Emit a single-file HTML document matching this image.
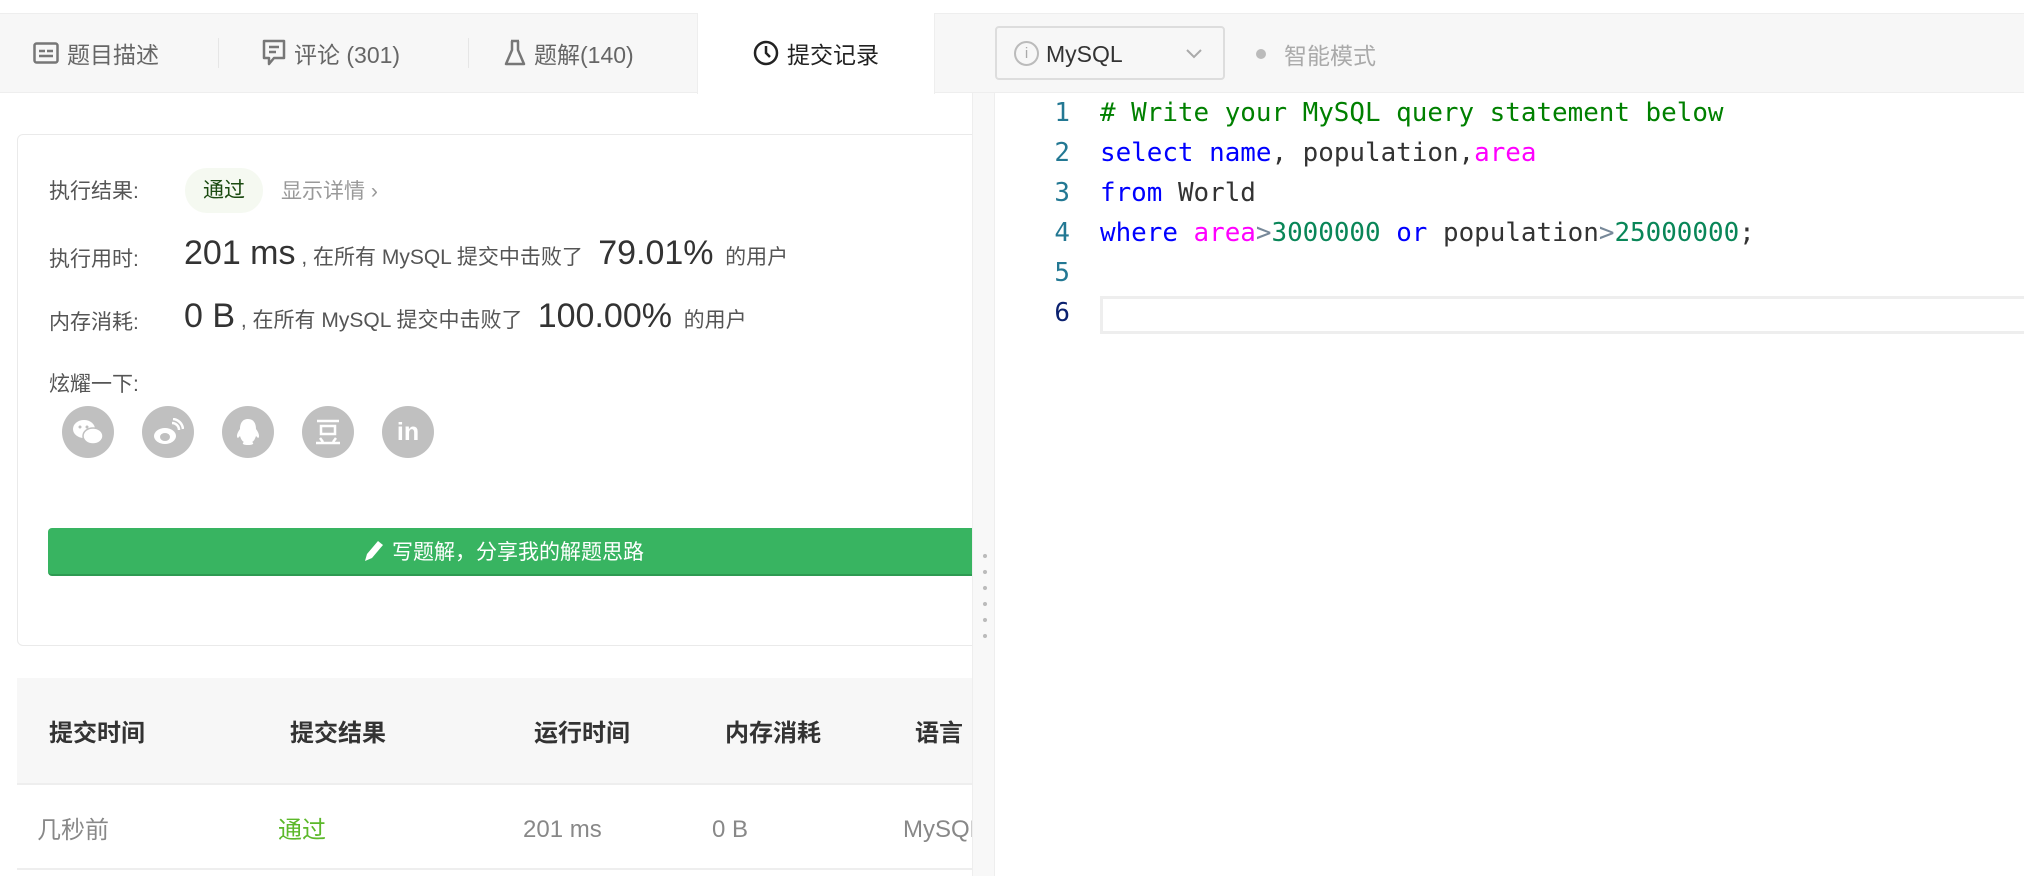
<!DOCTYPE html>
<html><head><meta charset="utf-8"><style>
*{box-sizing:border-box;margin:0;padding:0}
body{width:2024px;height:876px;overflow:hidden;background:#fff;font-family:"Liberation Sans","Noto Sans CJK SC",sans-serif;position:relative;color:#333}
.abs{position:absolute}
.tabbar{left:0;top:13px;width:2024px;height:80px;background:#f7f7f7;border-top:1px solid #eee;border-bottom:1px solid #eee}
.tab{top:13px;height:80px;display:flex;align-items:center;font-size:23px;color:#666;white-space:nowrap}
.tab svg{margin-right:8px}
.sep{top:38px;width:1px;height:30px;background:#e6e6e6}
.lbl{font-size:21px;color:#555;white-space:nowrap}
.big{font-size:34px;color:#333}
.ico{width:52px;height:52px;border-radius:50%;background:#c0c0c0;top:406px;display:flex;align-items:center;justify-content:center;color:#fff;font-weight:bold;font-size:26px}
.th{top:713px;font-size:24px;color:#333;font-weight:bold;white-space:nowrap}
.td{top:814px;font-size:24px;color:#888;white-space:nowrap}
.code{font-family:"DejaVu Sans Mono","Liberation Mono",monospace;font-size:25.9px;white-space:pre;line-height:40px}
.ln{left:1030px;width:40px;text-align:right;color:#237893}
.k{color:#0000ff}.c{color:#008000}.m{color:#ff00ff}.n{color:#098658}.g{color:#778899}
</style></head><body>
<div class="abs tabbar"></div>
<div class="abs" style="left:697px;top:13px;width:238px;height:81px;background:#fff;border-left:1px solid #eee;border-right:1px solid #eee"></div>
<div class="abs tab" style="left:33px"><svg width="26" height="22" viewBox="0 0 26 22"><rect x="1.5" y="1.5" width="23" height="19" rx="2" fill="none" stroke="#777" stroke-width="2.5"/><path d="M6 9h6M14 9h6M6 14h14" stroke="#777" stroke-width="2.5"/></svg>题目描述</div>
<div class="abs sep" style="left:218px"></div>
<div class="abs tab" style="left:262px"><svg width="24" height="28" viewBox="0 0 24 28"><path d="M2 2h20v17H12l-5 6v-6H2z" fill="none" stroke="#777" stroke-width="2.5" stroke-linejoin="round"/><path d="M7 8h10M7 13h7" stroke="#777" stroke-width="2.5"/></svg>评论 (301)</div>
<div class="abs sep" style="left:468px"></div>
<div class="abs tab" style="left:504px"><svg width="22" height="28" viewBox="0 0 22 28"><path d="M7 2h8M8 2v9L2 25h18L14 11V2" fill="none" stroke="#777" stroke-width="2.5" stroke-linejoin="round"/></svg>题解(140)</div>
<div class="abs tab" style="left:753px;color:#222"><svg width="26" height="26" viewBox="0 0 26 26"><circle cx="13" cy="13" r="11" fill="none" stroke="#222" stroke-width="2.5"/><path d="M13 6v7l4 4" fill="none" stroke="#222" stroke-width="2.5"/></svg>提交记录</div>
<!-- right header -->
<div class="abs" style="left:995px;top:26px;width:230px;height:54px;border:2px solid #ddd;border-radius:4px;background:#f7f7f7"></div>
<div class="abs" style="left:1014px;top:41px;width:25px;height:25px;border:2px solid #bbb;border-radius:50%;color:#aaa;font-size:15px;text-align:center;line-height:21px">i</div>
<div class="abs" style="left:1046px;top:41px;font-size:23px;color:#333">MySQL</div>
<svg class="abs" style="left:1186px;top:49px" width="16" height="10"><path d="M1 1l7 7 7-7" fill="none" stroke="#aaa" stroke-width="2"/></svg>
<div class="abs" style="left:1256px;top:49px;width:10px;height:10px;border-radius:50%;background:#bbb"></div>
<div class="abs" style="left:1284px;top:37px;font-size:23px;color:#aaa">智能模式</div>
<!-- card -->
<div class="abs" style="left:17px;top:134px;width:975px;height:512px;border:1px solid #eaeaea;border-radius:6px"></div>
<div class="abs lbl" style="left:49px;top:175px">执行结果:</div>
<div class="abs" style="left:185px;top:168px;width:78px;height:45px;border-radius:22px;background:#f5f9f1;color:#1a4a10;font-size:21px;text-align:center;line-height:45px">通过</div>
<div class="abs lbl" style="left:281px;top:175px;color:#999">显示详情 ›</div>
<div class="abs lbl" style="left:49px;top:243px">执行用时:</div>
<div class="abs" style="left:184px;top:234px;white-space:nowrap;font-size:21px;color:#555"><span class="big">201 ms</span> , 在所有 MySQL 提交中击败了 <span class="big">&nbsp;79.01%</span> &nbsp;的用户</div>
<div class="abs lbl" style="left:49px;top:306px">内存消耗:</div>
<div class="abs" style="left:184px;top:297px;white-space:nowrap;font-size:21px;color:#555"><span class="big">0 B</span> , 在所有 MySQL 提交中击败了 <span class="big">&nbsp;100.00%</span> &nbsp;的用户</div>
<div class="abs lbl" style="left:49px;top:368px">炫耀一下:</div>
<div class="abs ico" style="left:62px"><svg width="32" height="28" viewBox="0 0 32 28"><ellipse cx="12" cy="11" rx="11" ry="9" fill="#fff"/><ellipse cx="21" cy="18" rx="10" ry="8" fill="#fff" stroke="#c0c0c0" stroke-width="1.5"/><circle cx="8" cy="9" r="1.5" fill="#c0c0c0"/><circle cx="15" cy="9" r="1.5" fill="#c0c0c0"/></svg></div>
<div class="abs ico" style="left:142px"><svg width="32" height="28" viewBox="0 0 32 28"><ellipse cx="13" cy="18" rx="11" ry="8" fill="#fff"/><ellipse cx="13" cy="19" rx="5" ry="4" fill="#c0c0c0"/><path d="M20 5a7 7 0 0 1 7 7M21 1a11 11 0 0 1 10 10" fill="none" stroke="#fff" stroke-width="2.5"/></svg></div>
<div class="abs ico" style="left:222px"><svg width="26" height="30" viewBox="0 0 26 30"><path d="M13 2c-6 0-8 5-8 10-3 4-4 8-2 9l2-2c1 3 2 5 4 6-2 1-2 3 4 3s6-2 4-3c2-1 3-3 4-6l2 2c2-1 1-5-2-9 0-5-2-10-8-10z" fill="#fff"/></svg></div>
<div class="abs ico" style="left:302px"><svg width="28" height="28" viewBox="0 0 28 28"><path d="M3 3h22M7 8h14v8H7zM6 20l3 4M22 20l-3 4M2 25h24" fill="none" stroke="#fff" stroke-width="2.5"/></svg></div>
<div class="abs ico" style="left:382px;font-family:'Liberation Sans',sans-serif;font-size:25px">in</div>
<div class="abs" style="left:48px;top:528px;width:924px;height:48px;background:#38b461;border-radius:4px 0 0 4px;border-bottom:2px solid #2e9a52;color:#fff;font-size:21px;display:flex;align-items:center;justify-content:center;white-space:nowrap;padding-right:14px"><svg width="22" height="24" viewBox="0 0 22 24" style="margin-right:8px"><path d="M3 22l2-7L16 2l5 4-11 13z" fill="#fff"/></svg>写题解，分享我的解题思路</div>
<!-- table -->
<div class="abs" style="left:17px;top:678px;width:955px;height:107px;background:#f7f7f7;border-bottom:2px solid #eee"></div>
<div class="abs th" style="left:49px">提交时间</div>
<div class="abs th" style="left:290px">提交结果</div>
<div class="abs th" style="left:534px">运行时间</div>
<div class="abs th" style="left:725px">内存消耗</div>
<div class="abs th" style="left:915px">语言</div>
<div class="abs td" style="left:37px;top:810px">几秒前</div>
<div class="abs td" style="left:278px;top:810px;color:#5cb82a">通过</div>
<div class="abs td" style="left:523px;top:816px">201 ms</div>
<div class="abs td" style="left:712px;top:816px">0 B</div>
<div class="abs td" style="left:903px;top:816px;width:69px;overflow:hidden">MySQL</div>
<div class="abs" style="left:17px;top:868px;width:955px;height:2px;background:#eee"></div>
<!-- splitter -->
<div class="abs" style="left:972px;top:93px;width:23px;height:783px;background:#f8f8f8;border-left:1px solid #eee;border-right:1px solid #eee"></div>
<div class="abs" style="left:982px;top:548px;width:6px;height:96px;background:radial-gradient(circle,#bbb 1.8px,transparent 2.3px) 0 0/6px 16px"></div>
<!-- code -->
<div class="abs" style="left:1100px;top:296px;width:924px;height:38px;border:3px solid #eee;border-right:none"></div>
<div class="abs code ln" style="top:93px">1
2
3
4
5
<span style="color:#0b216f">6</span></div>
<div class="abs code" style="left:1100px;top:93px"><span class="c"># Write your MySQL query statement below</span>
<span class="k">select</span> <span class="k">name</span>, population,<span class="m">area</span>
<span class="k">from</span> World
<span class="k">where</span> <span class="m">area</span><span class="g">&gt;</span><span class="n">3000000</span> <span class="k">or</span> population<span class="g">&gt;</span><span class="n">25000000</span>;
</div>
</body></html>
